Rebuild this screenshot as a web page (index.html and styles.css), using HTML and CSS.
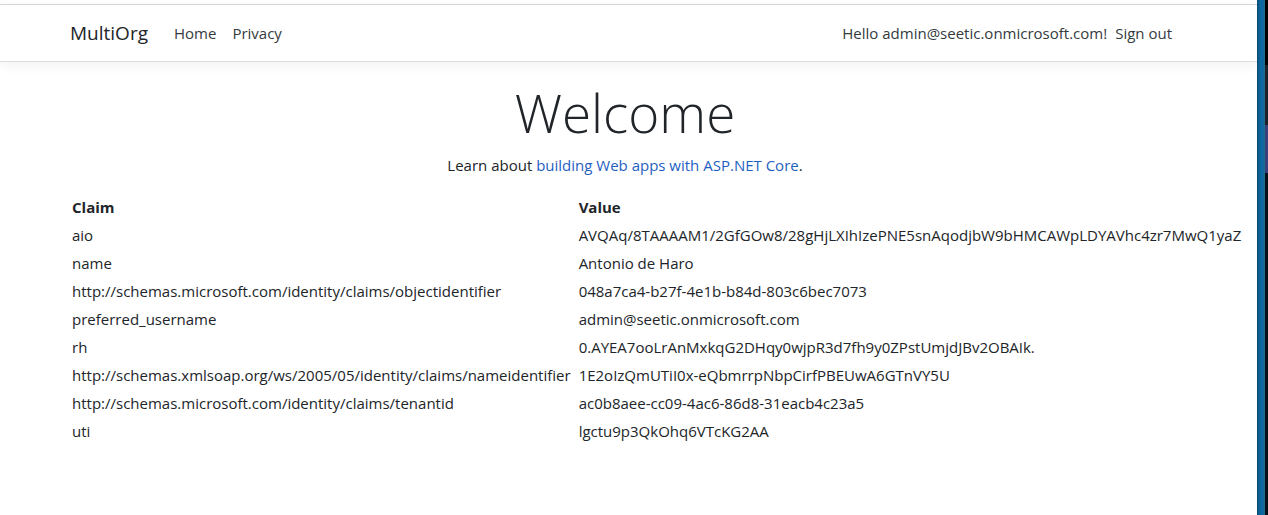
FILE: index.html
```html
<!DOCTYPE html>
<html lang="en">
<head>
<meta charset="utf-8">
<meta name="viewport" content="width=device-width, initial-scale=1">
<title>MultiOrg</title>
<link rel="stylesheet" href="styles.css">
</head>
<body>
<div class="page">
  <header class="site-header">
    <nav class="container navbar">
      <a class="brand" href="#">MultiOrg</a>
      <a class="nav-link" href="#">Home</a>
      <a class="nav-link" href="#">Privacy</a>
      <span class="user">Hello admin@seetic.onmicrosoft.com!</span>
      <a class="sign-out" href="#">Sign out</a>
    </nav>
  </header>
  <main class="container">
    <section class="intro">
      <h1 class="display">Welcome</h1>
      <p class="lead">Learn about <a class="link" href="#">building Web apps with ASP.NET Core</a>.</p>
    </section>
    <table class="claims">
      <thead>
        <tr><th scope="col">Claim</th><th scope="col">Value</th></tr>
      </thead>
      <tbody>
        <tr><td>aio</td><td>AVQAq/8TAAAAM1/2GfGOw8/28gHjLXIhIzePNE5snAqodjbW9bHMCAWpLDYAVhc4zr7MwQ1yaZ</td></tr>
        <tr><td>name</td><td>Antonio de Haro</td></tr>
        <tr><td>http://schemas.microsoft.com/identity/claims/objectidentifier</td><td>048a7ca4-b27f-4e1b-b84d-803c6bec7073</td></tr>
        <tr><td>preferred_username</td><td>admin@seetic.onmicrosoft.com</td></tr>
        <tr><td>rh</td><td>0.AYEA7ooLrAnMxkqG2DHqy0wjpR3d7fh9y0ZPstUmjdJBv2OBAIk.</td></tr>
        <tr><td>http://schemas.xmlsoap.org/ws/2005/05/identity/claims/nameidentifier</td><td>1E2oIzQmUTiI0x-eQbmrrpNbpCirfPBEUwA6GTnVY5U</td></tr>
        <tr><td>http://schemas.microsoft.com/identity/claims/tenantid</td><td>ac0b8aee-cc09-4ac6-86d8-31eacb4c23a5</td></tr>
        <tr><td>uti</td><td>lgctu9p3QkOhq6VTcKG2AA</td></tr>
      </tbody>
    </table>
  </main>
</div>
<div class="window-edge"></div>
<div class="desktop">
  <div class="desktop-top"></div>
  <div class="desktop-panel"></div>
  <div class="desktop-accent"></div>
</div>
</body>
</html>
```
FILE: styles.css
```css
* {
  box-sizing: border-box;
}

body {
  display: flex;
  min-height: 100vh;
  margin: 0;
  background: #fff;
  color: #212529;
  font-family: "Segoe UI", "Open Sans", "Noto Sans", sans-serif;
  font-size: 15px;
  line-height: 24px;
}

a {
  color: inherit;
  text-decoration: none;
}

.page {
  flex: 1;
  min-width: 0;
  overflow: hidden;
  padding-top: 4px;
}

.site-header {
  margin-bottom: 16px;
  border-top: 1px solid #d5d5d5;
  border-bottom: 1px solid #dcdddf;
  box-shadow: 0 4px 12px rgba(0, 0, 0, 0.05);
}

.container {
  max-width: 1131px;
  margin: 0 auto;
  padding: 0 14px 0 7px;
}

.navbar {
  display: flex;
  align-items: center;
  height: 56px;
  color: #343a40;
}

.brand {
  margin-right: 18px;
  color: #212529;
  font-size: 19px;
}

.nav-link {
  padding: 0 8px;
}

.user {
  margin-left: auto;
}

.sign-out {
  padding: 0 8px;
}

.intro {
  text-align: center;
}

.display {
  margin: 0 0 5px;
  font-size: 53px;
  font-weight: 300;
  line-height: 70px;
}

.lead {
  margin: 0 0 15px;
}

.link {
  color: #1f5fbf;
}

.claims {
  border-collapse: separate;
  border-spacing: 2px;
  white-space: nowrap;
}

.claims th,
.claims td {
  padding: 1px 6px 1px 0;
  text-align: left;
}

.window-edge {
  width: 8px;
  background: linear-gradient(90deg, #0a4a70, #0d68a0 40%, #0d68a0 75%, #2b6a85);
}

.desktop {
  display: flex;
  flex-direction: column;
  width: 3px;
  background: #02121a;
}

.desktop-top {
  height: 65px;
  background: #000;
}

.desktop-panel {
  height: 60px;
  background: #1b222b;
}

.desktop-accent {
  height: 48px;
  background: #35407c;
}
```
